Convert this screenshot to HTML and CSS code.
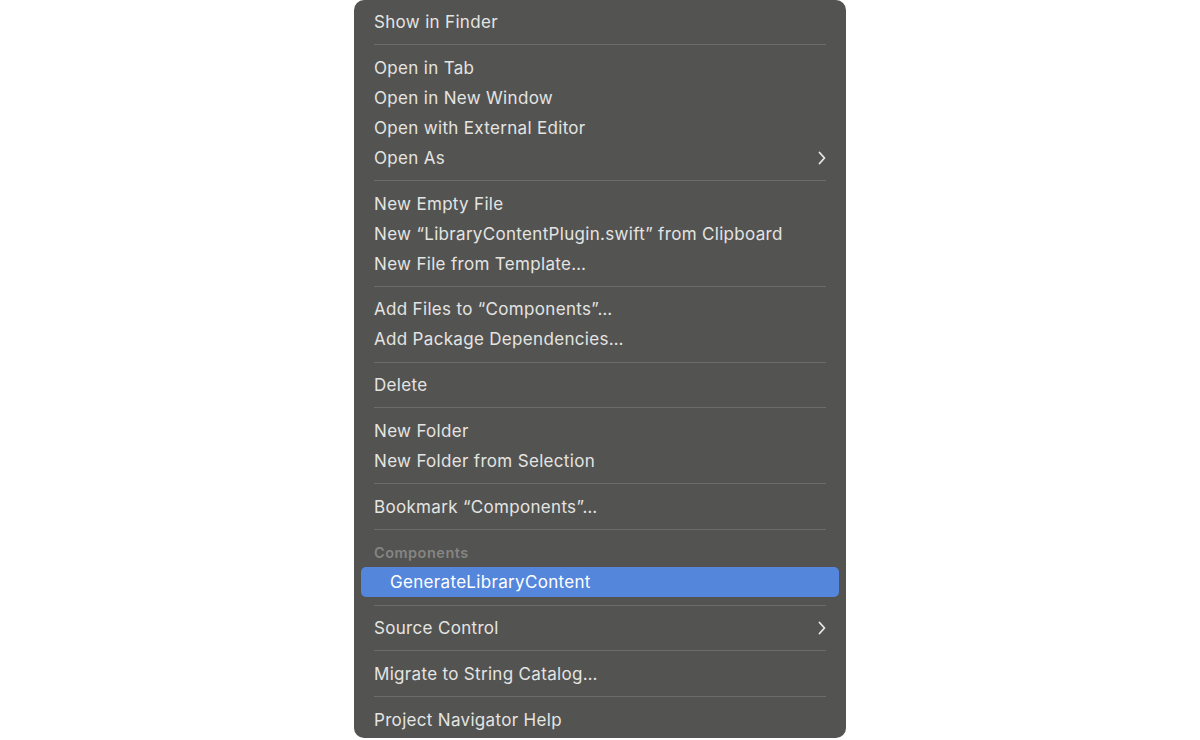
FILE: index.html
```html
<!doctype html>
<html lang="en">
<head>
	<meta charset="UTF-8" />
	<title>Context menu</title>
	<link rel="stylesheet" href="styles.css">
</head>
<body>
	<div class="menu">
		<div class="item">Show in Finder</div>
		<div class="sep"></div>
		<div class="item">Open in Tab</div>
		<div class="item">Open in New Window</div>
		<div class="item">Open with External Editor</div>
		<div class="item sub">Open As
			<svg class="chev" width="10" height="14" viewBox="0 0 10 14"><path d="M2.5 1.5 L7.5 7 L2.5 12.5" fill="none" stroke="#e8e8e6" stroke-width="1.8" stroke-linecap="round" stroke-linejoin="round"/></svg>
		</div>
		<div class="sep"></div>
		<div class="item">New Empty File</div>
		<div class="item">New “LibraryContentPlugin.swift” from Clipboard</div>
		<div class="item">New File from Template…</div>
		<div class="sep"></div>
		<div class="item">Add Files to “Components”…</div>
		<div class="item">Add Package Dependencies…</div>
		<div class="sep"></div>
		<div class="item">Delete</div>
		<div class="sep"></div>
		<div class="item">New Folder</div>
		<div class="item">New Folder from Selection</div>
		<div class="sep"></div>
		<div class="item">Bookmark “Components”…</div>
		<div class="sep"></div>
		<div class="header">Components</div>
		<div class="item active">GenerateLibraryContent</div>
		<div class="sep"></div>
		<div class="item sub">Source Control
			<svg class="chev" width="10" height="14" viewBox="0 0 10 14"><path d="M2.5 1.5 L7.5 7 L2.5 12.5" fill="none" stroke="#e8e8e6" stroke-width="1.8" stroke-linecap="round" stroke-linejoin="round"/></svg>
		</div>
		<div class="sep"></div>
		<div class="item">Migrate to String Catalog…</div>
		<div class="sep"></div>
		<div class="item">Project Navigator Help</div>
	</div>
</body>
</html>
```

FILE: styles.css
```css
html, body {margin:0; padding:0; background:#fff;}
body {font-family:Inter, "Liberation Sans", sans-serif; -webkit-font-smoothing:antialiased;}
.menu {width:492px; margin:0 auto; background:#535351; border-radius:10px; padding:7px 0 3px; box-sizing:border-box;}
.item {height:30px; display:flex; align-items:center; padding:0 19px 0 20px; font-size:17px; color:#e4e4e2; letter-spacing:0.32px;}
.item.sub {justify-content:space-between;}
.chev {display:block;}
.item.active {background:#5486dc; color:#fff; margin:0 7px; padding-left:29px; border-radius:5px;}
.sep {height:15.75px; display:flex; align-items:center; padding:0 20px;}
.sep::after {content:""; display:block; height:1px; width:100%; background:#6c6c6a;}
.header {height:30px; display:flex; align-items:flex-end; padding:0 20px 6px; box-sizing:border-box; font-size:14.5px; font-weight:600; color:#858583; letter-spacing:0.5px;}
```
